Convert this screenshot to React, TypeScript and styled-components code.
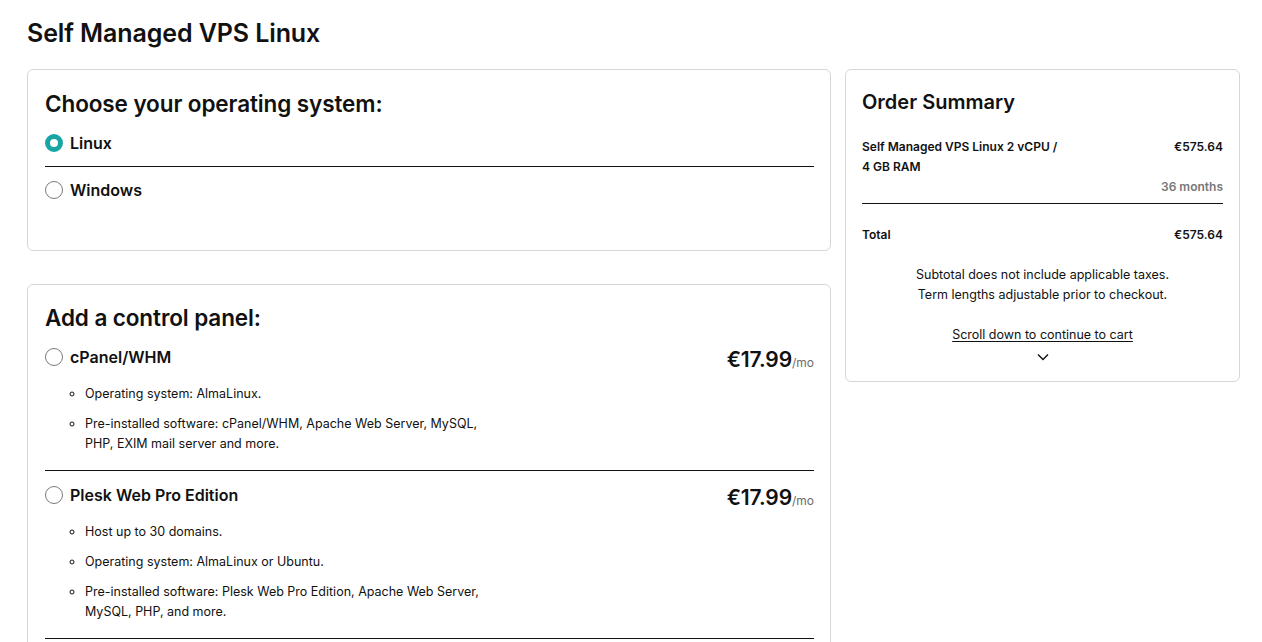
import { FC } from 'react';
import styled, { createGlobalStyle } from 'styled-components';

const GlobalStyle = createGlobalStyle`
  body {
    margin: 0;
    background: #fff;
    color: #111;
    font-family: Inter, "Noto Sans", sans-serif;
  }
`;

const Page = styled.div`
  padding: 18px 23px 0 27px;
`;

const Title = styled.h1`
  margin: 0 0 20px;
  font-size: 25px;
  font-weight: 600;
  line-height: 31px;
  letter-spacing: -0.1px;
`;

const Columns = styled.div`
  display: grid;
  grid-template-columns: 804px 395px;
  gap: 14px;
  align-items: start;
`;

const LeftColumn = styled.div`
  display: flex;
  flex-direction: column;
  gap: 33px;
`;

const Card = styled.section<{ $pad?: string }>`
  border: 1px solid #d4d7da;
  border-radius: 6px;
  padding: ${(p) => p.$pad ?? '19px 16px 18px 17px'};
  background: #fff;
`;

const CardHeading = styled.h2`
  margin: 0 0 14px;
  font-size: 22.5px;
  font-weight: 600;
  line-height: 30px;
  letter-spacing: -0.1px;
`;

const OptionRow = styled.div<{ $divider?: boolean }>`
  display: flex;
  flex-direction: column;
  padding-bottom: ${(p) => (p.$divider ? '13px' : '15px')};
  border-bottom: ${(p) => (p.$divider ? '1px solid #111' : 'none')};
  & + & {
    padding-top: 13px;
  }
`;

const PanelRow = styled(OptionRow)`
  padding-bottom: 16px;
  & + & {
    padding-top: 14px;
  }
`;

const OptionHead = styled.label`
  display: flex;
  align-items: center;
  gap: 7px;
  height: 20px;
`;

const Radio = styled.span<{ $checked?: boolean }>`
  box-sizing: border-box;
  width: 18px;
  height: 18px;
  border-radius: 50%;
  flex: none;
  background: #fff;
  border: ${(p) => (p.$checked ? '5px solid #1aa5a5' : '1px solid #7b7b7b')};
`;

const OptionLabel = styled.span`
  font-size: 16px;
  font-weight: 600;
  flex: 1;
`;

const Price = styled.span`
  font-size: 21px;
  font-weight: 600;
  letter-spacing: -0.1px;
  padding-top: 4px;
`;

const PerMonth = styled.span`
  font-size: 12px;
  font-weight: 400;
  color: #6b6b6b;
  letter-spacing: 0;
`;

const Features = styled.ul`
  list-style: circle;
  margin: 17px 0 0;
  padding-left: 40px;
  display: flex;
  flex-direction: column;
  gap: 10px;
  li {
    font-size: 12.5px;
    line-height: 20px;
    max-width: 400px;
  }
`;

const SummaryHeading = styled.h2`
  margin: 0 0 21px;
  font-size: 20px;
  font-weight: 600;
  line-height: 28px;
`;

const LineItem = styled.div`
  display: flex;
  justify-content: space-between;
  font-size: 12px;
  font-weight: 600;
  line-height: 20px;
`;

const ItemName = styled.span`
  max-width: 200px;
`;

const Term = styled.div`
  text-align: right;
  font-size: 12px;
  font-weight: 600;
  color: #777;
  line-height: 20px;
  padding-bottom: 6px;
  border-bottom: 1px solid #111;
`;

const TotalRow = styled(LineItem)`
  margin-top: 21px;
`;

const Notes = styled.p`
  margin: 20px 0 0;
  text-align: center;
  font-size: 12.5px;
  line-height: 20px;
`;

const CartLink = styled.a`
  display: block;
  margin-top: 20px;
  text-align: center;
  font-size: 12.5px;
  line-height: 20px;
  color: #111;
  text-decoration: underline;
  text-underline-offset: 2px;
`;

const Chevron = styled.div`
  display: flex;
  justify-content: center;
  margin-top: 8px;
`;

type Panel = { name: string; price: string; features: string[] };

const panels: Panel[] = [
  {
    name: 'cPanel/WHM',
    price: '€17.99',
    features: [
      'Operating system: AlmaLinux.',
      'Pre-installed software: cPanel/WHM, Apache Web Server, MySQL, PHP, EXIM mail server and more.',
    ],
  },
  {
    name: 'Plesk Web Pro Edition',
    price: '€17.99',
    features: [
      'Host up to 30 domains.',
      'Operating system: AlmaLinux or Ubuntu.',
      'Pre-installed software: Plesk Web Pro Edition, Apache Web Server, MySQL, PHP, and more.',
    ],
  },
];

const App: FC = () => {
  return (
    <Page>
      <GlobalStyle />
      <Title>Self Managed VPS Linux</Title>
      <Columns>
        <LeftColumn>
          <Card $pad="19px 16px 35px 17px">
            <CardHeading>Choose your operating system:</CardHeading>
            <OptionRow $divider>
              <OptionHead>
                <Radio $checked />
                <OptionLabel>Linux</OptionLabel>
              </OptionHead>
            </OptionRow>
            <OptionRow>
              <OptionHead>
                <Radio />
                <OptionLabel>Windows</OptionLabel>
              </OptionHead>
            </OptionRow>
          </Card>
          <Card $pad="18px 16px 40px 17px">
            <CardHeading>Add a control panel:</CardHeading>
            {panels.map((p) => (
              <PanelRow key={p.name} $divider>
                <OptionHead>
                  <Radio />
                  <OptionLabel>{p.name}</OptionLabel>
                  <Price>
                    {p.price}
                    <PerMonth>/mo</PerMonth>
                  </Price>
                </OptionHead>
                <Features>
                  {p.features.map((f) => (
                    <li key={f}>{f}</li>
                  ))}
                </Features>
              </PanelRow>
            ))}
          </Card>
        </LeftColumn>
        <Card $pad="18px 16px 20px 16px">
          <SummaryHeading>Order Summary</SummaryHeading>
          <LineItem>
            <ItemName>Self Managed VPS Linux 2 vCPU / 4 GB RAM</ItemName>
            <span>€575.64</span>
          </LineItem>
          <Term>36 months</Term>
          <TotalRow>
            <span>Total</span>
            <span>€575.64</span>
          </TotalRow>
          <Notes>
            Subtotal does not include applicable taxes.
            <br />
            Term lengths adjustable prior to checkout.
          </Notes>
          <CartLink href="#">Scroll down to continue to cart</CartLink>
          <Chevron>
            <svg width="12" height="8" viewBox="0 0 12 8" fill="none">
              <path d="M1 1.5l5 5 5-5" stroke="#111" strokeWidth="1.4" />
            </svg>
          </Chevron>
        </Card>
      </Columns>
    </Page>
  );
};

export default App;
